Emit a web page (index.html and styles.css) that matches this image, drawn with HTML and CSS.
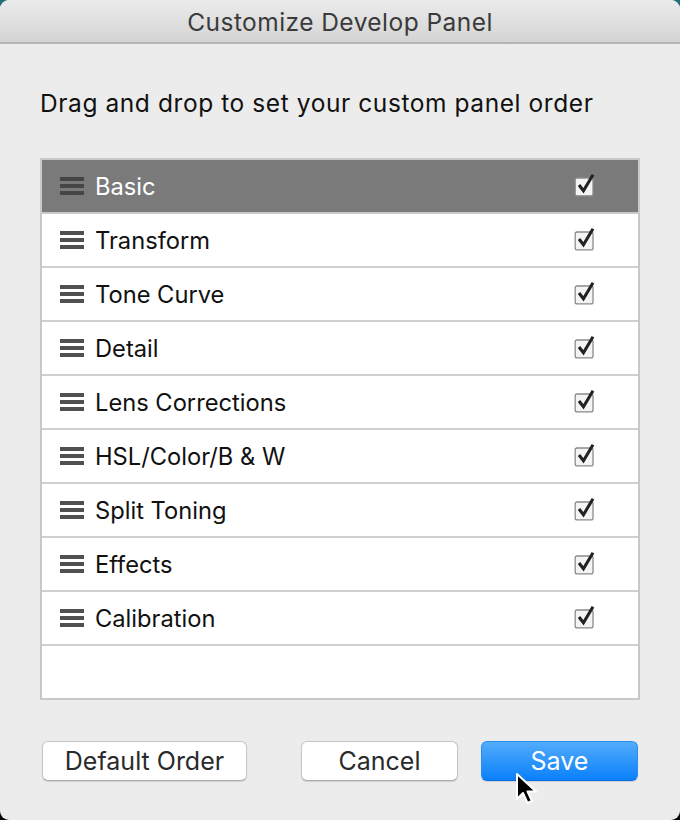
FILE: index.html
```html
<!DOCTYPE html>
<html>
<head>
<meta charset="utf-8">
<link rel="stylesheet" href="styles.css">
</head>
<body>
<div class="window">
  <div class="titlebar">Customize Develop Panel</div>
  <div class="content">
    <p class="intro">Drag and drop to set your custom panel order</p>
    <div class="list">
      <div class="row selected"><span class="grip"><i></i><i></i><i></i></span><span class="label">Basic</span><svg class="check" viewBox="0 0 22 22"><rect x="2.5" y="5.5" width="14" height="14" rx="1.5" fill="#f4f4f4" stroke="#8a8a8a"/><path d="M5.5 11 L9 15.5 L16.5 3" fill="none" stroke="#222" stroke-width="2.4"/></svg></div>
      <div class="row"><span class="grip"><i></i><i></i><i></i></span><span class="label">Transform</span><svg class="check" viewBox="0 0 22 22"><rect x="2.5" y="5.5" width="14" height="14" rx="1.5" fill="#f4f4f4" stroke="#8a8a8a"/><path d="M5.5 11 L9 15.5 L16.5 3" fill="none" stroke="#222" stroke-width="2.4"/></svg></div>
      <div class="row"><span class="grip"><i></i><i></i><i></i></span><span class="label">Tone Curve</span><svg class="check" viewBox="0 0 22 22"><rect x="2.5" y="5.5" width="14" height="14" rx="1.5" fill="#f4f4f4" stroke="#8a8a8a"/><path d="M5.5 11 L9 15.5 L16.5 3" fill="none" stroke="#222" stroke-width="2.4"/></svg></div>
      <div class="row"><span class="grip"><i></i><i></i><i></i></span><span class="label">Detail</span><svg class="check" viewBox="0 0 22 22"><rect x="2.5" y="5.5" width="14" height="14" rx="1.5" fill="#f4f4f4" stroke="#8a8a8a"/><path d="M5.5 11 L9 15.5 L16.5 3" fill="none" stroke="#222" stroke-width="2.4"/></svg></div>
      <div class="row"><span class="grip"><i></i><i></i><i></i></span><span class="label">Lens Corrections</span><svg class="check" viewBox="0 0 22 22"><rect x="2.5" y="5.5" width="14" height="14" rx="1.5" fill="#f4f4f4" stroke="#8a8a8a"/><path d="M5.5 11 L9 15.5 L16.5 3" fill="none" stroke="#222" stroke-width="2.4"/></svg></div>
      <div class="row"><span class="grip"><i></i><i></i><i></i></span><span class="label">HSL/Color/B &amp; W</span><svg class="check" viewBox="0 0 22 22"><rect x="2.5" y="5.5" width="14" height="14" rx="1.5" fill="#f4f4f4" stroke="#8a8a8a"/><path d="M5.5 11 L9 15.5 L16.5 3" fill="none" stroke="#222" stroke-width="2.4"/></svg></div>
      <div class="row"><span class="grip"><i></i><i></i><i></i></span><span class="label">Split Toning</span><svg class="check" viewBox="0 0 22 22"><rect x="2.5" y="5.5" width="14" height="14" rx="1.5" fill="#f4f4f4" stroke="#8a8a8a"/><path d="M5.5 11 L9 15.5 L16.5 3" fill="none" stroke="#222" stroke-width="2.4"/></svg></div>
      <div class="row"><span class="grip"><i></i><i></i><i></i></span><span class="label">Effects</span><svg class="check" viewBox="0 0 22 22"><rect x="2.5" y="5.5" width="14" height="14" rx="1.5" fill="#f4f4f4" stroke="#8a8a8a"/><path d="M5.5 11 L9 15.5 L16.5 3" fill="none" stroke="#222" stroke-width="2.4"/></svg></div>
      <div class="row"><span class="grip"><i></i><i></i><i></i></span><span class="label">Calibration</span><svg class="check" viewBox="0 0 22 22"><rect x="2.5" y="5.5" width="14" height="14" rx="1.5" fill="#f4f4f4" stroke="#8a8a8a"/><path d="M5.5 11 L9 15.5 L16.5 3" fill="none" stroke="#222" stroke-width="2.4"/></svg></div>
      <div class="row empty"></div>
    </div>
    <div class="buttons">
      <button class="btn default">Default Order</button>
      <div class="right">
        <button class="btn">Cancel</button>
        <button class="btn primary">Save</button>
      </div>
    </div>
  </div>
  <svg class="cursor" viewBox="0 0 24 36" width="24" height="36"><path d="M2 2 L2 27 L8 21 L12.5 31 L17 29 L12.5 19.5 L21 19.5 Z" fill="#000" stroke="#fff" stroke-width="2" stroke-linejoin="round"/></svg>
</div>
</body>
</html>
```

FILE: styles.css
```css
html, body {
  margin: 0;
  padding: 0;
  width: 680px;
  height: 820px;
  overflow: hidden;
}
body {
  background: linear-gradient(to bottom, #1f7078 0%, #1a4a50 40%, #000 100%);
  font-family: Inter, Roboto, "Liberation Sans", sans-serif;
}
.window {
  position: relative;
  width: 680px;
  height: 820px;
  background: #ececec;
  border-radius: 9px;
  overflow: hidden;
}
.titlebar {
  height: 42px;
  line-height: 44px;
  text-align: center;
  font-size: 24.5px;
  letter-spacing: 0.45px;
  color: #3a3a3a;
  background: linear-gradient(to bottom, #ebebeb, #d4d4d4);
  border-bottom: 2px solid #b5b5b5;
}
.content {
  padding: 0 40px;
}
.intro {
  margin: 0;
  padding-top: 44px;
  height: 70px;
  font-size: 24.5px;
  letter-spacing: 0.58px;
  color: #111;
  line-height: 30px;
}
.list {
  border: 2px solid #c8c8c8;
  background: #fff;
  display: flex;
  flex-direction: column;
}
.row {
  height: 52px;
  display: flex;
  align-items: center;
  border-bottom: 2px solid #cfcfcf;
  padding-left: 18px;
  background: #fff;
}
.row:last-child {
  border-bottom: none;
}
.row.selected {
  background: #7a7a7a;
  border-bottom-color: #c8c8c8;
}
.grip {
  display: flex;
  flex-direction: column;
  gap: 3.5px;
  width: 24px;
  margin-right: 11px;
}
.grip i {
  display: block;
  height: 3.5px;
  background: #505050;
}
.selected .grip i {
  background: #454545;
}
.label {
  flex: 1;
  font-size: 23.7px;
  color: #111;
}
.selected .label {
  color: #fff;
}
.check {
  width: 28px;
  height: 28px;
  margin-right: 38px;
  margin-top: -3px;
}
.buttons {
  display: flex;
  justify-content: space-between;
  margin-top: 41px;
  padding: 0 2px;
}
.right {
  display: flex;
  gap: 23px;
}
.btn {
  height: 40px;
  border: 1px solid #c6c6c6;
  border-bottom-color: #aaa;
  border-radius: 6px;
  background: #fff;
  font-family: Inter, Roboto, "Liberation Sans", sans-serif;
  font-size: 25px;
  color: #2a2a2a;
  box-shadow: 0 1px 1px rgba(0,0,0,0.12);
  padding: 0;
}
.btn.default { width: 205px; }
.right .btn { width: 157px; }
.btn.primary {
  background: linear-gradient(to bottom, #52acfb, #0b80fa);
  border-color: #2a8ef5;
  border-bottom-color: #0a6fe0;
  color: #fff;
}
.cursor {
  position: absolute;
  left: 515px;
  top: 772px;
}
```
